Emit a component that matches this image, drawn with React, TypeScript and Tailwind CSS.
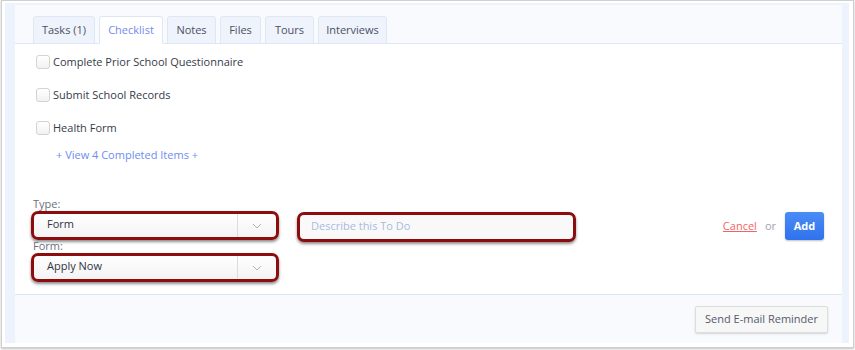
const tabs = [
  { label: "Tasks (1)", w: "w-[62px]" },
  { label: "Checklist", w: "w-[64px]", active: true },
  { label: "Notes", w: "w-[49px]" },
  { label: "Files", w: "w-[41px]" },
  { label: "Tours", w: "w-[49px]" },
  { label: "Interviews", w: "w-[69px]" },
];

const items = ["Complete Prior School Questionnaire", "Submit School Records", "Health Form"];

function Chevron() {
  return (
    <svg width="10" height="6" viewBox="0 0 10 6" fill="none">
      <path d="M1 1l4 4 4-4" stroke="#a9b3c6" strokeWidth="1" />
    </svg>
  );
}

function Select({ value }: { value: string }) {
  return (
    <div className="h-[29px] w-[248px] rounded-[7px] border-[3px] border-[#8c0d0d] shadow-[0_2px_3px_rgba(0,0,0,0.45)] overflow-hidden bg-gradient-to-b from-white to-[#f3f3f3] flex items-center">
      <span className="flex-1 pl-[13px] pb-[2px] text-[11px] text-[#2f3442]">{value}</span>
      <span className="h-full w-[39px] border-l border-[#dcdcdc] flex items-center justify-center">
        <Chevron />
      </span>
    </div>
  );
}

export default function App() {
  return (
    <div className="w-[855px] h-[350px] bg-white font-['Open_Sans',sans-serif]">
      <div className="ml-[1px] w-[853px] h-[348px] border border-[#cfcfcf] shadow-[0_1px_2px_rgba(0,0,0,0.25)] bg-white pl-[3px] pr-[4px] pt-[2px]">
        <div className="h-[340px] bg-[#edf3fd] pl-[10px] pr-[7px] pt-[2px]">
          <div className="h-[338px] bg-white flex flex-col">
            {/* tabs */}
            <div className="h-[39px] bg-[#f8fafe] border-b border-[#dde6f4] pl-[18px] pt-[11px] flex gap-[4px]">
              {tabs.map((t) => (
                <div
                  key={t.label}
                  className={`${t.w} h-[28px] rounded-t-[3px] border border-[#dfe7f5] flex items-center justify-center text-[11px] ${
                    t.active
                      ? "bg-white border-b-white text-[#7489ee]"
                      : "bg-[#eef3fc] text-[#4b5163]"
                  }`}
                >
                  {t.label}
                </div>
              ))}
            </div>

            {/* content */}
            <div className="h-[250px] pl-[21px] pr-[18px] pt-[8px]">
              {items.map((it) => (
                <div key={it} className="h-[20px] mb-[13px] flex items-center gap-[3px]">
                  <span className="w-[14px] h-[14px] rounded-[3px] border border-[#d3d3d3] bg-gradient-to-b from-white to-[#f2f2f2]" />
                  <span className="text-[11px] text-[#363b4a]">{it}</span>
                </div>
              ))}
              <div className="h-[20px] pl-[20px] -mt-[6px] flex items-center text-[11px] text-[#6f8cf1]">
                + View 4 Completed Items +
              </div>

              <div className="mt-[32px] -ml-[5px] flex items-start">
                <div className="w-[248px]">
                  <div className="h-[14px] pl-[2px] text-[11px] leading-[14px] text-[#6b7080]">Type:</div>
                  <Select value="Form" />
                  <div className="h-[13px] pl-[2px] text-[11px] leading-[12px] text-[#6b7080]">Form:</div>
                  <Select value="Apply Now" />
                </div>
                <div className="ml-[18px] mt-[15px] w-[279px] h-[30px] rounded-[7px] border-[3px] border-[#8c0d0d] shadow-[0_2px_3px_rgba(0,0,0,0.45)] bg-[#f9f9fa] flex items-center pl-[11px] pb-[2px] text-[11px] text-[#aab9e2]">
                  Describe this To Do
                </div>
                <div className="ml-auto mt-[15px] flex items-center">
                  <span className="text-[11px] text-[#f16464] underline">Cancel</span>
                  <span className="ml-[8px] text-[11px] text-[#a0a4ae]">or</span>
                  <span className="ml-[9px] w-[39px] h-[28px] rounded-[3px] bg-gradient-to-b from-[#4b8cf5] to-[#2f72ec] shadow-[0_1px_2px_rgba(0,0,0,0.25)] flex items-center justify-center text-[11px] font-bold text-white">
                    Add
                  </span>
                </div>
              </div>
            </div>

            {/* footer */}
            <div className="flex-1 bg-[#f8fafe] border-t border-[#dde6f4] flex justify-end items-start pr-[14px] pt-[11px]">
              <span className="h-[27px] px-[9px] rounded-[2px] border border-[#dedede] bg-[#f7f7f7] shadow-[0_1px_2px_rgba(0,0,0,0.15)] flex items-center text-[11px] text-[#535a6c]">
                Send E-mail Reminder
              </span>
            </div>
          </div>
        </div>
      </div>
    </div>
  );
}
